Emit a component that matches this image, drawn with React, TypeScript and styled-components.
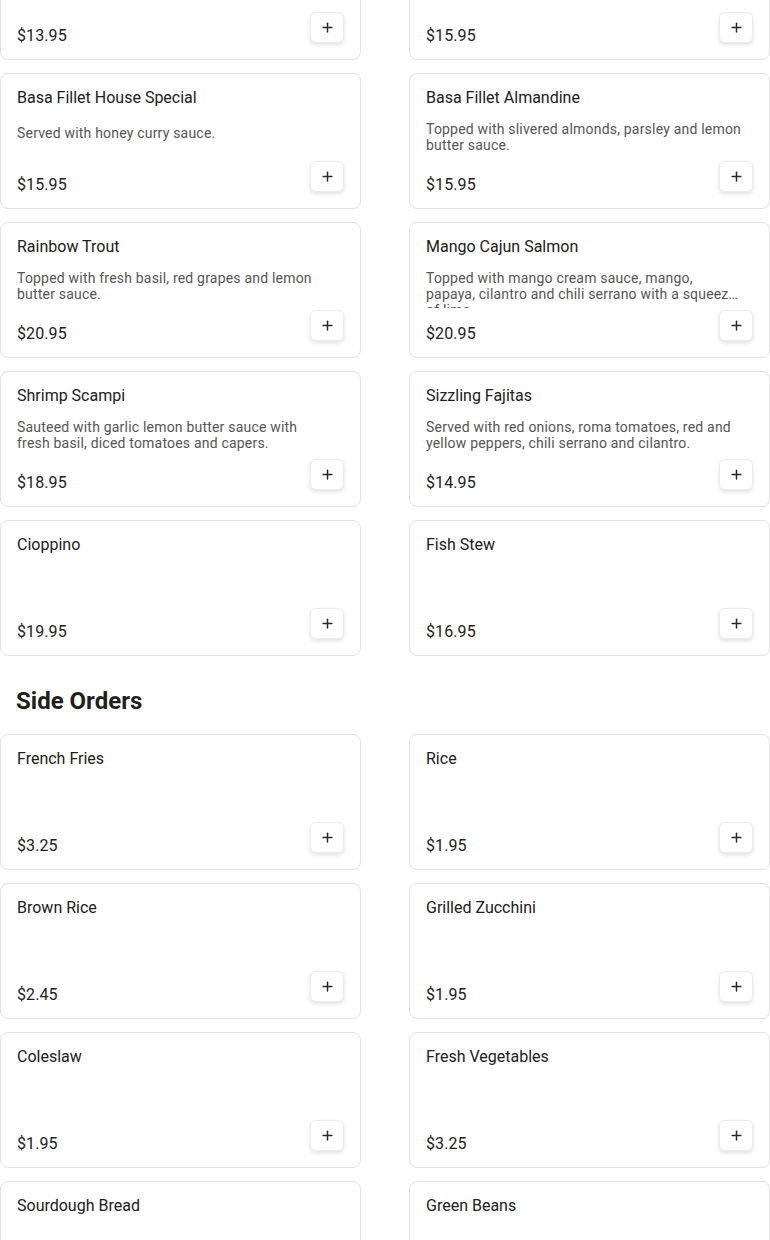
import * as React from 'react';
import styled, { createGlobalStyle } from 'styled-components';
import { Plus } from 'lucide-react';

type Item = {
  name: string,
  description?: string,
  price: string,
};

type Section = {
  title?: string,
  items: Item[],
};

const GlobalStyle = createGlobalStyle`
  html, body {
    margin: 0;
    padding: 0;
    background: #fff;
  }

  body {
    font-family: Roboto, "Liberation Sans", Arial, sans-serif;
    color: #212121;
    overflow: hidden;
  }
`;

const Page = styled.div`
  margin-top: -76px;
`;

const SectionBlock = styled.section`
  display: flex;
  flex-direction: column;
`;

const SectionTitle = styled.h2`
  margin: 0;
  padding: 31px 16px 19px;
  font-size: 24px;
  line-height: 28px;
  font-weight: 700;
  color: #1f1f1f;
`;

const Grid = styled.div`
  display: grid;
  grid-template-columns: 1fr 1fr;
  column-gap: 48px;
  row-gap: 13px;
`;

const Card = styled.div`
  display: flex;
  flex-direction: column;
  height: 136px;
  box-sizing: border-box;
  padding: 13px 16px 11px;
  border: 1px solid #e3e3e3;
  border-radius: 8px;
  background: #fff;
`;

const Name = styled.div`
  font-size: 16px;
  line-height: 22px;
  color: #202020;
  white-space: nowrap;
  overflow: hidden;
  text-overflow: ellipsis;
`;

const Description = styled.div<{ $short: boolean }>`
  margin-top: 12px;
  height: 38px;
  flex-shrink: 0;
  box-sizing: border-box;
  padding-top: ${({ $short }) => ($short ? '4px' : '0')};
  padding-right: 12px;
  font-size: 14px;
  line-height: 16px;
  letter-spacing: 0.2px;
  color: #555;
  display: -webkit-box;
  -webkit-line-clamp: 2;
  -webkit-box-orient: vertical;
  overflow: hidden;
`;

const Footer = styled.div`
  margin-top: auto;
  display: flex;
  align-items: flex-end;
  justify-content: space-between;
`;

const Price = styled.span`
  font-size: 16px;
  line-height: 24px;
  letter-spacing: 0.1px;
  color: #222;
`;

const AddButton = styled.button`
  display: flex;
  align-items: center;
  justify-content: center;
  width: 34px;
  height: 31px;
  margin-bottom: 5px;
  padding: 0;
  border: 1px solid #ececec;
  border-radius: 6px;
  background: #fff;
  color: #2a2a2a;
  box-shadow: 0 2px 4px rgba(0, 0, 0, 0.12);
  cursor: pointer;
`;

const sections: Section[] = [
  {
    items: [
      { name: 'Grilled Tilapia', description: 'Served with lemon butter sauce.', price: '$13.95' },
      { name: 'Blackened Basa', description: 'Seasoned with cajun spices.', price: '$15.95' },
      { name: 'Basa Fillet House Special', description: 'Served with honey curry sauce.', price: '$15.95' },
      { name: 'Basa Fillet Almandine', description: 'Topped with slivered almonds, parsley and lemon butter sauce.', price: '$15.95' },
      { name: 'Rainbow Trout', description: 'Topped with fresh basil, red grapes and lemon butter sauce.', price: '$20.95' },
      {
        name: 'Mango Cajun Salmon',
        description: 'Topped with mango cream sauce, mango, papaya, cilantro and chili serrano with a squeeze of lime.',
        price: '$20.95',
      },
      { name: 'Shrimp Scampi', description: 'Sauteed with garlic lemon butter sauce with fresh basil, diced tomatoes and capers.', price: '$18.95' },
      { name: 'Sizzling Fajitas', description: 'Served with red onions, roma tomatoes, red and yellow peppers, chili serrano and cilantro.', price: '$14.95' },
      { name: 'Cioppino', price: '$19.95' },
      { name: 'Fish Stew', price: '$16.95' },
    ],
  },
  {
    title: 'Side Orders',
    items: [
      { name: 'French Fries', price: '$3.25' },
      { name: 'Rice', price: '$1.95' },
      { name: 'Brown Rice', price: '$2.45' },
      { name: 'Grilled Zucchini', price: '$1.95' },
      { name: 'Coleslaw', price: '$1.95' },
      { name: 'Fresh Vegetables', price: '$3.25' },
      { name: 'Sourdough Bread', price: '$1.50' },
      { name: 'Green Beans', price: '$2.45' },
    ],
  },
];

const MenuCard = ({ item }: { item: Item }) => {
  const description = item.description || '';

  return (
    <Card>
      <Name>{item.name}</Name>
      <Description $short={description.length > 0 && description.length < 36}>
        {description}
      </Description>
      <Footer>
        <Price>{item.price}</Price>
        <AddButton type="button" aria-label={`Add ${item.name}`}>
          <Plus size={15} strokeWidth={2.4} />
        </AddButton>
      </Footer>
    </Card>
  );
};

const App = () => (
  <>
    <GlobalStyle />
    <Page>
      {sections.map((section, i) => (
        <SectionBlock key={section.title || `section-${i}`}>
          {section.title && <SectionTitle>{section.title}</SectionTitle>}
          <Grid>
            {section.items.map((item) => <MenuCard key={item.name} item={item} />)}
          </Grid>
        </SectionBlock>
      ))}
    </Page>
  </>
);

export default App;
